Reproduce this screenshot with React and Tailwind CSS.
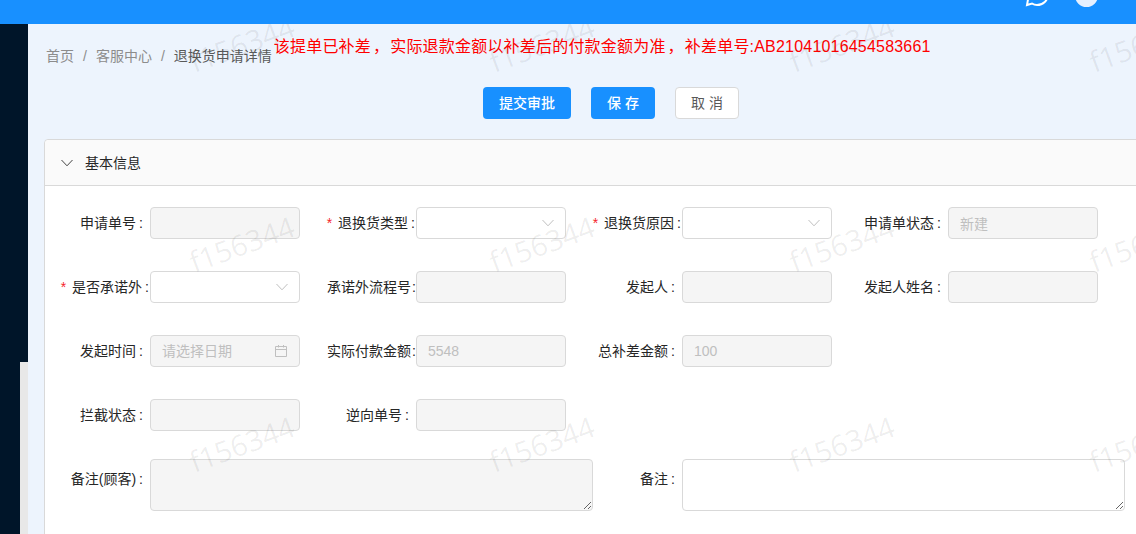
const font = { fontFamily: '"Liberation Sans", "Noto Sans CJK SC", sans-serif' }

const Chevron = ({ color }) => (
  <svg width="12" height="8" viewBox="0 0 12 8" fill="none" stroke={color} strokeWidth="1" className="shrink-0">
    <path d="M.5 1 6 6.800 11.500 1" />
  </svg>
)

const Label = ({ text, required, className = "pr-[7px]" }) => (
  <div className={`w-[100px] shrink-0 flex justify-end items-center whitespace-nowrap text-sm text-[#262626] ${className}`}>
    {required && <span className="text-[#f5222d] mr-[6px]">*</span>}
    <span>{text}</span>
    <span className="ml-[3px]">:</span>
  </div>
)

const inputBase = "w-[150px] h-8 rounded border border-[#d9d9d9] px-[11px] text-sm outline-none"

const Field = ({ label, required, labelClass, value = "", placeholder, type = "text" }) => {
  if (type === "select") {
    return (
      <div className="flex h-8">
        <Label text={label} required={required} className={labelClass} />
        <div className={`${inputBase} bg-white flex items-center justify-end`}>
          <Chevron color="#bfbfbf" />
        </div>
      </div>
    )
  }
  if (type === "date") {
    return (
      <div className="flex h-8">
        <Label text={label} className={labelClass} />
        <div className={`${inputBase} bg-[#f5f5f5] flex items-center justify-between text-[#bfbfbf]`}>
          <span>{placeholder}</span>
          <svg width="14" height="14" viewBox="0 0 14 14" fill="none" stroke="#bfbfbf" strokeWidth="1">
            <path d="M1.500 2.500h11v10h-11zM1.500 5.500h11M4.500 1v2.500M9.500 1v2.500" />
          </svg>
        </div>
      </div>
    )
  }
  return (
    <div className="flex h-8">
      <Label text={label} required={required} className={labelClass} />
      <input disabled defaultValue={value} className={`${inputBase} bg-[#f5f5f5] text-[#bfbfbf]`} />
    </div>
  )
}

const AreaField = ({ label, disabled }) => (
  <div className="flex h-[52px]">
    <div className="w-[100px] shrink-0 flex justify-end pr-[7px] pt-[10px] text-sm leading-[20px] text-[#262626] whitespace-nowrap">
      {label}
      <span className="ml-[3px]">:</span>
    </div>
    <textarea
      disabled={disabled}
      className={`w-[443px] h-[52px] shrink-0 block rounded border border-[#d9d9d9] outline-none ${disabled ? "bg-[#f5f5f5]" : "bg-white"}`}
    />
  </div>
)

const Watermarks = () => {
  const tiles = Array.from({ length: 12 })
  return (
    <div className="absolute left-[92px] top-[-57px] grid grid-cols-[repeat(4,300px)] auto-rows-[200px] pointer-events-none">
      {tiles.map((_, i) => (
        <div key={i} className="flex items-center justify-center">
          <span
            className="-rotate-[20deg] text-[29px] leading-none text-black/[0.07] whitespace-nowrap"
            style={{ fontFamily: '"Open Sans", sans-serif' }}
          >
            f156344
          </span>
        </div>
      ))}
    </div>
  )
}

export default function App() {
  return (
    <div className="relative w-[1136px] h-[534px] overflow-hidden bg-[#edf4fd]" style={font}>
      {/* Top bar */}
      <div className="relative z-10 h-6 bg-[#1890ff] overflow-hidden flex justify-end pr-[38px] gap-[25px]">
        <svg width="26" height="26" viewBox="0 0 26 26" fill="none" stroke="#fff" strokeWidth="2" className="-mt-[19px]">
          <path d="M13 2c6 0 11 4.500 11 11s-5 11-11 11c-2 0-3.500-.5-5-1.500L3 24l1-5.500C2.500 16.500 2 15 2 13 2 6.500 7 2 13 2z" />
        </svg>
        <div className="w-[23px] h-[23px] rounded-full bg-[#e6f0ff] -mt-[16px]" />
      </div>

      <div className="flex h-[510px]">
        {/* Sidebar */}
        <div className="w-[28px] shrink-0 bg-[#001529] flex flex-col items-end pt-[338px]">
          <div className="w-2 flex-1 bg-[#e8e8e8]" />
        </div>

        {/* Content */}
        <div className="flex-1 min-w-0">
          <div className="flex items-start pl-[18px] pt-[14px] h-[63px]">
            <div className="flex text-sm leading-[22px] text-[#8c8c8c] whitespace-nowrap pt-[7px]">
              <span>首页</span>
              <span className="mx-[9px]">/</span>
              <span>客服中心</span>
              <span className="mx-[9px]">/</span>
              <span className="text-[#595959]">退换货申请详情</span>
            </div>
            <div className="text-base leading-[18px] tracking-[0.2px] text-[#ff0000] whitespace-nowrap ml-[2px]">
              该提单已补差<span className="ml-[2px] mr-px">，</span>实际退款金额以补差后的付款金额为准<span className="ml-[2px] mr-px">，</span>补差单号:AB21041016454583661
            </div>
          </div>

          <div className="flex justify-start gap-5 pl-[455px]">
            <button className="w-[88px] h-8 rounded bg-[#1890ff] text-white text-sm font-medium">提交审批</button>
            <button className="w-16 h-8 rounded bg-[#1890ff] text-white text-sm font-medium">保 存</button>
            <button className="w-16 h-8 rounded bg-white border border-[#d9d9d9] text-[#595959] text-sm">取 消</button>
          </div>

          {/* Card */}
          <div className="ml-4 mt-5 w-[1140px] rounded-t border border-[#d9d9d9] bg-white h-[400px]">
            <div className="h-[46px] bg-[#fafafa] border-b border-[#d9d9d9] flex items-center pl-4 gap-3 rounded-t text-sm text-[#262626]">
              <Chevron color="#434343" />
              <span>基本信息</span>
            </div>
            <div className="pl-[5px] pt-[21px]">
              <div className="grid grid-cols-[repeat(4,266px)] auto-rows-[32px] gap-y-8">
                <Field label="申请单号" />
                <Field label="退换货类型" required type="select" labelClass="pr-px" />
                <Field label="退换货原因" required type="select" labelClass="pr-px" />
                <Field label="申请单状态" value="新建" />

                <Field label="是否承诺外" required type="select" labelClass="pr-px" />
                <Field label="承诺外流程号" labelClass="pr-0 [&>span:last-child]:ml-px" />
                <Field label="发起人" />
                <Field label="发起人姓名" />

                <Field label="发起时间" type="date" placeholder="请选择日期" />
                <Field label="实际付款金额" value="5548" labelClass="pr-0 [&>span:last-child]:ml-px" />
                <Field label="总补差金额" value="100" />
                <div />

                <Field label="拦截状态" />
                <Field label="逆向单号" />
              </div>
              <div className="flex mt-7">
                <div className="w-[532px] shrink-0">
                  <AreaField label="备注(顾客)" disabled />
                </div>
                <AreaField label="备注" />
              </div>
            </div>
          </div>
        </div>
      </div>

      <Watermarks />
    </div>
  )
}
